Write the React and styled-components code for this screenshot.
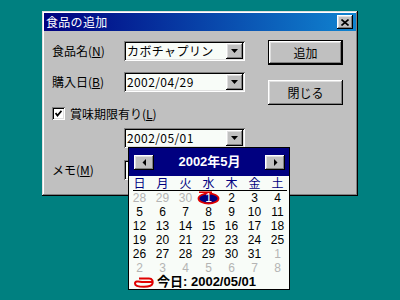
import React from 'react';
import styled, { createGlobalStyle } from 'styled-components';

const Global = createGlobalStyle`
  html, body { margin: 0; padding: 0; }
  body {
    background: #008080;
    width: 400px;
    height: 300px;
    overflow: hidden;
    font-family: "Noto Sans CJK JP", sans-serif;
    font-size: 12px;
    -webkit-font-smoothing: none;
  }
`;

const raised = `box-shadow: inset -1px -1px #000, inset 1px 1px #fff, inset -2px -2px #808080, inset 2px 2px #dfdfdf;`;
const sunken = `box-shadow: inset 1px 1px #808080, inset -1px -1px #fff, inset 2px 2px #000, inset -2px -2px #dfdfdf;`;

const Desktop = styled.div`
  width: 400px;
  height: 300px;
  box-sizing: border-box;
  padding: 11px 0 0 42px;
`;

const Window = styled.div`
  position: relative;
  width: 316px;
  height: 185px;
  box-sizing: border-box;
  padding: 2px;
  background: #c0c0c0;
  box-shadow: inset -1px -1px #000, inset 1px 1px #dfdfdf, inset -2px -2px #808080, inset 2px 2px #fff;
`;

const TitleBar = styled.div`
  height: 18px;
  display: flex;
  align-items: center;
  padding: 0 3px 0 2px;
  background: linear-gradient(90deg, #000080, #1084d0);
  color: #fff;
  font-size: 12px;
  line-height: 18px;
`;

const TitleText = styled.span`
  flex: 1;
  letter-spacing: 0.3px;
`;

const CloseButton = styled.div`
  width: 16px;
  height: 14px;
  background: #c0c0c0;
  ${raised}
  display: flex;
  align-items: center;
  justify-content: center;
`;

const Body = styled.div`
  display: flex;
  padding: 9px 0 0 8px;
`;

const Form = styled.div`
  width: 216px;
  display: flex;
  flex-direction: column;
`;

const Row = styled.div`
  display: flex;
  align-items: center;
  height: ${p => p.$h || 20}px;
  margin-top: ${p => p.$top || 0}px;
  padding-left: ${p => p.$indent || 0}px;
`;

const Label = styled.span`
  width: 72px;
  color: #000;
  font-size: 12px;
  line-height: 20px;
`;

const Combo = styled.div`
  width: 121px;
  height: 20px;
  box-sizing: border-box;
  padding: 2px;
  display: flex;
  background: #f8fcf8;
  ${sunken}
`;

const ComboText = styled.span`
  flex: 1;
  padding-left: 1px;
  font-size: 12px;
  line-height: 16px;
  letter-spacing: 0.4px;
  color: #000;
  white-space: nowrap;
  overflow: hidden;
`;

const DropButton = styled.div`
  width: 17px;
  height: 16px;
  background: #c0c0c0;
  ${raised}
  display: flex;
  align-items: center;
  justify-content: center;
`;

const TextBox = styled.div`
  width: 121px;
  height: 20px;
  box-sizing: border-box;
  background: #f8fcf8;
  ${sunken}
`;

const CheckBox = styled.div`
  width: 13px;
  height: 13px;
  box-sizing: border-box;
  background: #fff;
  ${sunken}
  display: flex;
  align-items: center;
  justify-content: center;
  margin-right: 5px;
`;

const CheckLabel = styled.span`
  font-size: 12px;
  line-height: 14px;
`;

const Buttons = styled.div`
  display: flex;
  flex-direction: column;
  gap: 15px;
`;

const Button = styled.div`
  width: 75px;
  height: 25px;
  box-sizing: border-box;
  background: #c0c0c0;
  display: flex;
  align-items: center;
  justify-content: center;
  font-size: 12px;
  color: #000;
  ${p => p.$default
    ? `box-shadow: inset 0 0 0 1px #000, inset -2px -2px #000, inset 2px 2px #fff, inset -3px -3px #808080, inset 3px 3px #dfdfdf;`
    : raised}
`;

const Popup = styled.div`
  position: absolute;
  left: 86px;
  top: 136px;
  width: 162px;
  height: 143px;
  box-sizing: border-box;
  border: 1px solid #000;
  background: #f8fcf8;
  display: flex;
  flex-direction: column;
`;

const CalHeader = styled.div`
  height: 28px;
  background: #000080;
  display: flex;
  align-items: center;
  justify-content: space-between;
  padding: 0 4px 0 5px;
`;

const NavButton = styled.div`
  width: 20px;
  height: 15px;
  background: #c0c0c0;
  ${raised}
  display: flex;
  align-items: center;
  justify-content: center;
`;

const MonthTitle = styled.span`
  color: #fff;
  font-family: "Liberation Sans", "Noto Sans CJK JP", sans-serif;
  font-weight: bold;
  font-size: 13px;
  line-height: 16px;
`;

const Grid = styled.div`
  display: grid;
  grid-template-columns: repeat(7, 23px);
  margin-left: -1px;
`;

const WeekDay = styled.span`
  height: 14px;
  line-height: 13px;
  text-align: center;
  color: #000080;
  font-size: 12px;
`;

const Divider = styled.div`
  height: 1px;
  margin: 0 2px 0 4px;
  background: #000;
`;

const Day = styled.span`
  position: relative;
  height: 14px;
  line-height: 14px;
  text-align: center;
  font-family: "Liberation Sans", sans-serif;
  font-size: 12px;
  color: ${p => (p.$muted ? '#b4b4b4' : p.$selected ? '#fff' : '#000')};
`;

const DayNum = styled.span`
  position: relative;
`;

const Mark = styled.svg`
  position: absolute;
  left: -1px;
  top: 0;
`;

const TodayRow = styled.div`
  height: 14px;
  display: flex;
  align-items: center;
  padding-left: 5px;
  gap: 3px;
`;

const TodayText = styled.span`
  font-family: "Liberation Sans", "Noto Sans CJK JP", sans-serif;
  font-weight: bold;
  font-size: 13px;
  line-height: 14px;
  color: #000;
`;

const Arrow = ({ dir }) => (
  <svg width="7" height="7" viewBox="0 0 7 7">
    {dir === 'left'
      ? <polygon points="5,0 5,7 1.5,3.5" fill="#000" />
      : <polygon points="2,0 2,7 5.5,3.5" fill="#000" />}
  </svg>
);

const DownArrow = () => (
  <svg width="7" height="4" viewBox="0 0 7 4">
    <polygon points="0,0 7,0 3.5,4" fill="#000" />
  </svg>
);

const days = [
  [28, 1], [29, 1], [30, 1], [1, 0, 1], [2], [3], [4],
  [5], [6], [7], [8], [9], [10], [11],
  [12], [13], [14], [15], [16], [17], [18],
  [19], [20], [21], [22], [23], [24], [25],
  [26], [27], [28], [29], [30], [31], [1, 1],
  [2, 1], [3, 1], [4, 1], [5, 1], [6, 1], [7, 1], [8, 1],
];

const weekdays = ['日', '月', '火', '水', '木', '金', '土'];

export default function App() {
  return (
    <>
      <Global />
      <Desktop>
        <Window>
          <TitleBar>
            <TitleText>食品の追加</TitleText>
            <CloseButton>
              <svg width="8" height="7" viewBox="0 0 8 7">
                <path d="M0.5 0.5 L7.5 6.5 M7.5 0.5 L0.5 6.5" stroke="#000" strokeWidth="1.6" />
              </svg>
            </CloseButton>
          </TitleBar>
          <Body>
            <Form>
              <Row $top={1}>
                <Label>食品名(<u>N</u>)</Label>
                <Combo>
                  <ComboText>カボチャプリン</ComboText>
                  <DropButton><DownArrow /></DropButton>
                </Combo>
              </Row>
              <Row $top={11}>
                <Label>購入日(<u>B</u>)</Label>
                <Combo>
                  <ComboText>2002/04/29</ComboText>
                  <DropButton><DownArrow /></DropButton>
                </Combo>
              </Row>
              <Row $top={15} $h={13}>
                <CheckBox>
                  <svg width="7" height="7" viewBox="0 0 7 7">
                    <path d="M0.5 3 L2.5 5.5 L6.5 0.8" stroke="#000" strokeWidth="1.8" fill="none" />
                  </svg>
                </CheckBox>
                <CheckLabel>賞味期限有り(<u>L</u>)</CheckLabel>
              </Row>
              <Row $top={8} $indent={72}>
                <Combo>
                  <ComboText>2002/05/01</ComboText>
                  <DropButton><DownArrow /></DropButton>
                </Combo>
              </Row>
              <Row $top={12}>
                <Label>メモ(<u>M</u>)</Label>
                <TextBox />
              </Row>
            </Form>
            <Buttons>
              <Button $default>追加</Button>
              <Button>閉じる</Button>
            </Buttons>
          </Body>
          <Popup>
            <CalHeader>
              <NavButton><Arrow dir="left" /></NavButton>
              <MonthTitle>2002年5月</MonthTitle>
              <NavButton><Arrow dir="right" /></NavButton>
            </CalHeader>
            <Grid>
              {weekdays.map(w => <WeekDay key={w}>{w}</WeekDay>)}
            </Grid>
            <Divider />
            <Grid>
              {days.map(([n, muted, sel], i) => (
                <Day key={i} $muted={!!muted} $selected={!!sel}>
                  {sel && (
                    <Mark width="25" height="14" viewBox="0 0 25 14">
                      <ellipse cx="12.5" cy="7.5" rx="10" ry="5" fill="#000080" stroke="#e00000" strokeWidth="1.8" />
                      <path d="M3 1.2 L16 1.2" stroke="#e00000" strokeWidth="1.6" />
                    </Mark>
                  )}
                  <DayNum>{n}</DayNum>
                </Day>
              ))}
            </Grid>
            <TodayRow>
              <svg width="20" height="11" viewBox="0 0 20 11">
                <path d="M5 1.5 L15 1.5 C18.5 1.5 19 4.5 18.5 6.5 C18 9 15 9.8 10 9.8 C4 9.8 1 9 1 6.5 C1 4.3 4 4 8 5 L19 5" stroke="#e00000" strokeWidth="2" fill="none" />
              </svg>
              <TodayText>今日: 2002/05/01</TodayText>
            </TodayRow>
          </Popup>
        </Window>
      </Desktop>
    </>
  );
}
